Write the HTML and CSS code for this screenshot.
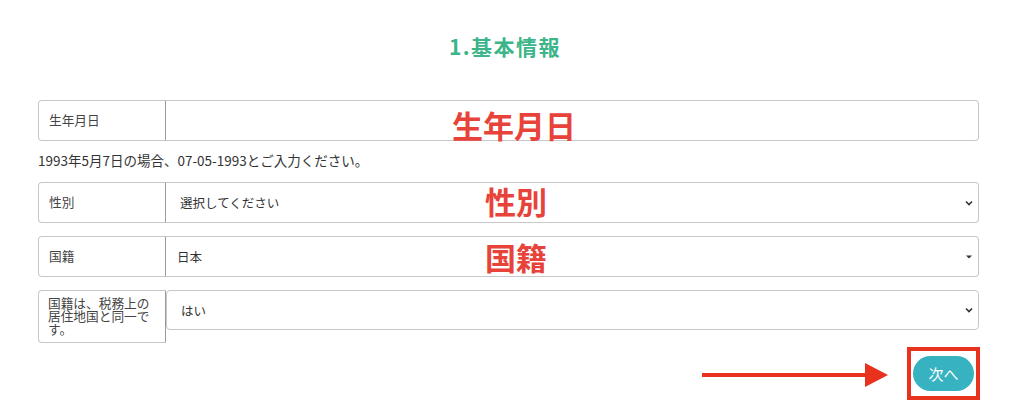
FILE: index.html
```html
<!DOCTYPE html>
<html lang="ja">
<head>
<meta charset="utf-8">
<link rel="stylesheet" href="styles.css">
</head>
<body>
<div class="page">
  <h1 class="title">1.基本情報</h1>
  <form class="form">
    <div class="row row-first">
      <div class="label">生年月日</div>
      <div class="field"></div>
      <span class="note note-birth">生年月日</span>
    </div>
    <p class="help">1993年5月7日の場合、07-05-1993とご入力ください。</p>
    <div class="row">
      <div class="label">性別</div>
      <div class="field select">
        <span>選択してください</span>
        <svg class="chev" width="10" height="8" viewBox="0 0 10 8"><path d="M2 2.5 L5 5.5 L8 2.5" fill="none" stroke="#333" stroke-width="1.6"/></svg>
      </div>
      <span class="note note-sex">性別</span>
    </div>
    <div class="row">
      <div class="label">国籍</div>
      <div class="field select field-jp">
        <span>日本</span>
        <svg class="caret" width="10" height="8" viewBox="0 0 10 8"><path d="M2 2.5 L8 2.5 L5 5.5 Z" fill="#333"/></svg>
      </div>
      <span class="note note-nat">国籍</span>
    </div>
    <div class="row row-tall">
      <div class="label label-tall">国籍は、税務上の居住地国と同一です。</div>
      <div class="field select field-own">
        <span>はい</span>
        <svg class="chev" width="10" height="8" viewBox="0 0 10 8"><path d="M2 2.5 L5 5.5 L8 2.5" fill="none" stroke="#333" stroke-width="1.6"/></svg>
      </div>
    </div>
    <div class="actions">
      <svg class="arrow" width="188" height="26" viewBox="0 0 188 26"><rect x="0" y="11" width="166" height="4" fill="#e8321e"/><path d="M163 1 L186 13 L163 25 Z" fill="#e8321e"/></svg>
      <div class="highlight">
        <button type="button" class="next">次へ</button>
      </div>
    </div>
  </form>
</div>
</body>
</html>
```

FILE: styles.css
```css
* { box-sizing: border-box; }
html, body { margin: 0; padding: 0; background: #fff; }
body {
  font-family: "Noto Sans CJK JP", "Noto Sans", sans-serif;
  color: #333;
  width: 1024px;
  height: 419px;
  overflow: hidden;
}
.page {
  padding: 0 45px 0 38px;
}
.title {
  margin: 0;
  padding: 33px 7px 0 0;
  height: 100px;
  text-align: center;
  font-size: 21px;
  font-weight: 700;
  color: #3bb589;
  line-height: 26px;
  letter-spacing: 1.5px;
}
.form { width: 941px; }
.row {
  position: relative;
  display: flex;
  align-items: flex-start;
  height: 41px;
  margin-bottom: 13px;
}
.row-first { margin-bottom: 0; }
.row-tall { height: 53px; margin-bottom: 4px; }
.label {
  width: 128px;
  height: 41px;
  flex: none;
  border: 1px solid #c8c8c8;
  border-right: 1px solid #9a9a9a;
  border-radius: 4px 0 0 4px;
  font-size: 12.7px;
  line-height: 14px;
  padding: 12px 9px 0 10px;
  color: #444;
}
.label-tall {
  height: 53px;
  padding: 5px 9px 0 9px;
  line-height: 13px;
}
.field {
  flex: 1;
  height: 41px;
  border: 1px solid #c8c8c8;
  border-left: none;
  border-radius: 0 4px 4px 0;
  display: flex;
  align-items: center;
  justify-content: space-between;
  padding: 0 4px 0 14px;
  font-size: 12.5px;
  color: #333;
}
.field-jp { padding-left: 11px; }
.field-own {
  height: 40px;
  border-left: 1px solid #c8c8c8;
  border-radius: 4px;
}
.chev, .caret { flex: none; }
.note {
  position: absolute;
  font-size: 31px;
  font-weight: 700;
  color: #e8433b;
  line-height: 36px;
}
.note-birth { left: 414px; top: 7px; }
.note-sex { left: 447px; top: 1px; }
.note-nat { left: 447px; top: 3px; }
.help {
  margin: 10px 0 13px;
  font-size: 13.5px;
  line-height: 18px;
  color: #333;
}
.actions {
  display: flex;
  justify-content: flex-end;
  align-items: center;
  gap: 17px;
  margin-right: -1px;
}
.arrow { margin-top: 2px; }
.highlight {
  border: 4px solid #e8321e;
  width: 73px;
  height: 53px;
  display: flex;
  align-items: center;
  justify-content: center;
}
.next {
  width: 61px;
  height: 35px;
  border: none;
  border-radius: 18px;
  background: #36b2c1;
  color: #fff;
  font-family: "Noto Sans CJK JP", sans-serif;
  font-size: 15px;
  padding: 0;
}
```
